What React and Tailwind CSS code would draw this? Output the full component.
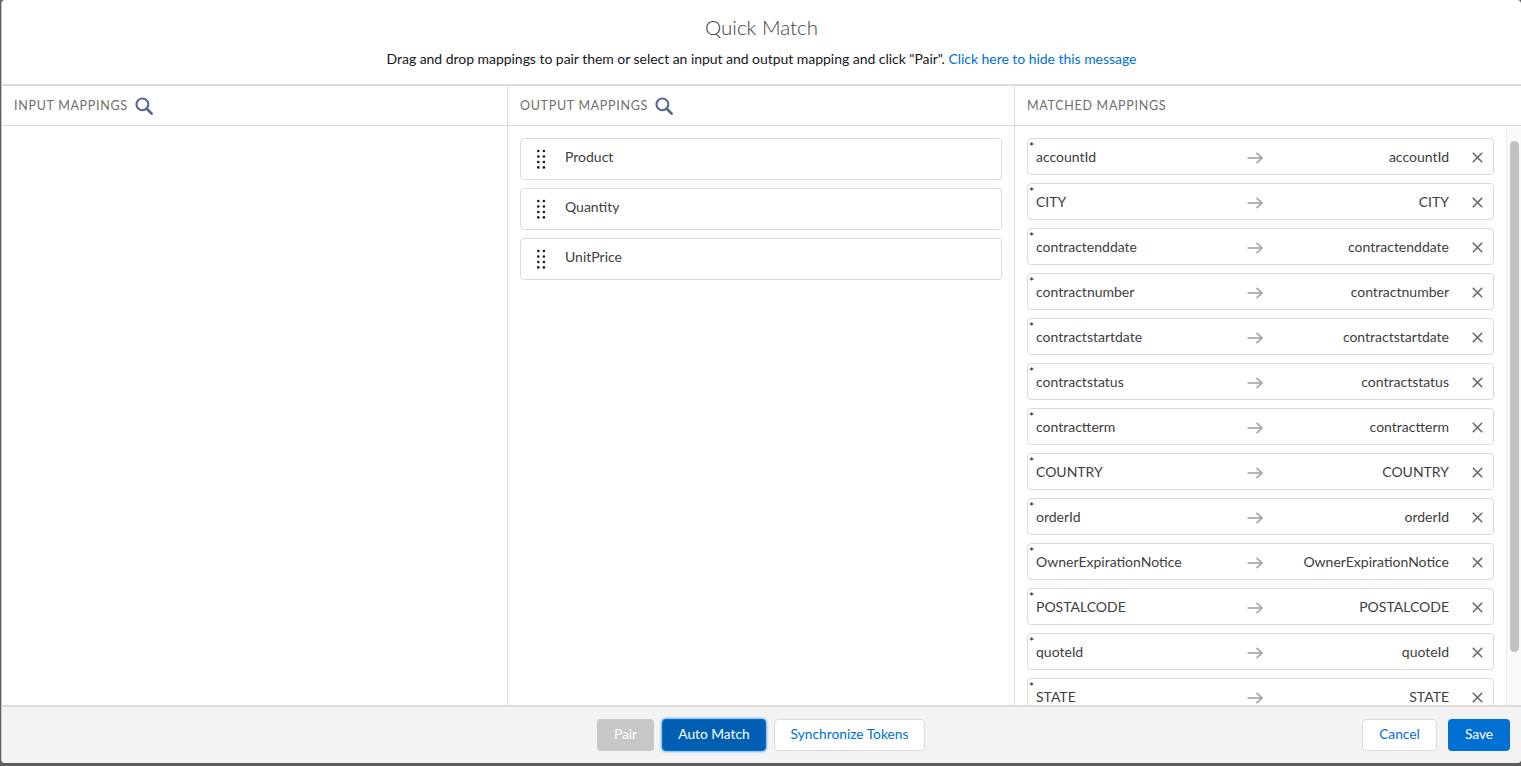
const outputs = ["Product", "Quantity", "UnitPrice"];

const matched = [
  "accountId",
  "CITY",
  "contractenddate",
  "contractnumber",
  "contractstartdate",
  "contractstatus",
  "contractterm",
  "COUNTRY",
  "orderId",
  "OwnerExpirationNotice",
  "POSTALCODE",
  "quoteId",
  "STATE",
];

function Grip() {
  return (
    <svg width="10" height="20" viewBox="0 0 10 20" fill="#1a1a1a">
      {[2, 7.5, 13, 18.4].map((y) => (
        <g key={y}>
          <rect x="1" y={y - 1.3} width="2.6" height="2.6" rx="1.3" />
          <rect x="6.6" y={y - 1.3} width="2.6" height="2.6" rx="1.3" />
        </g>
      ))}
    </svg>
  );
}

function SearchIcon() {
  return (
    <svg width="18" height="18" viewBox="0 0 18 18" fill="none" stroke="#54698d">
      <circle cx="7.4" cy="7.4" r="5.9" strokeWidth="2.1" />
      <path d="M11.8 11.8L16.6 16.6" strokeWidth="2.7" strokeLinecap="round" />
    </svg>
  );
}

function Arrow() {
  return (
    <svg width="16" height="12" viewBox="0 0 16 12" fill="none" stroke="#a8a7a5" strokeWidth="1.7">
      <path d="M0.5 6H15" />
      <path d="M9.5 0.8L15 6L9.5 11.2" />
    </svg>
  );
}

function Cross() {
  return (
    <svg width="11" height="11" viewBox="0 0 11 11" fill="none" stroke="#6b6967" strokeWidth="1.6">
      <path d="M0.8 0.8L10.2 10.2M10.2 0.8L0.8 10.2" />
    </svg>
  );
}

function ColumnHeader({ title, search }) {
  return (
    <div className="flex h-10 shrink-0 items-center gap-[7px] border-b border-[#dddbda] px-3">
      <span className="pt-[2px] text-[12.5px] tracking-[0.7px] text-[#706e6b]">{title}</span>
      {search && <SearchIcon />}
    </div>
  );
}

function OutputRow({ name }) {
  return (
    <div className="flex h-[42px] items-start rounded border border-[#dddbda] bg-white pl-[15px]">
      <div className="mt-[10px]">
        <Grip />
      </div>
      <span className="ml-[19px] mt-[8px] text-sm leading-5 text-[#3e3e3c]">{name}</span>
    </div>
  );
}

function MatchedRow({ name }) {
  return (
    <div className="relative flex h-[37px] shrink-0 items-start rounded border border-[#dddbda] bg-white pl-2 pr-[10px]">
      <span className="absolute left-[1px] top-[2px] text-xs leading-3 text-[#080707]">*</span>
      <span className="mt-[8px] w-[211px] text-sm leading-5 text-[#3e3e3c]">{name}</span>
      <div className="mt-[13px]">
        <Arrow />
      </div>
      <span className="mt-[8px] flex-1 text-right text-sm leading-5 text-[#3e3e3c]">{name}</span>
      <div className="ml-[23px] mt-[13px]">
        <Cross />
      </div>
    </div>
  );
}

export default function App() {
  return (
    <div className="h-[766px] overflow-hidden bg-[#5c5c5c] font-['Lato',sans-serif]">
      <div className="ml-[1px] flex h-[763px] flex-col overflow-hidden rounded-sm border-l border-[#c8c8c8] bg-white">
        <div className="flex h-[86px] shrink-0 flex-col items-center border-b-2 border-[#dddbda]">
          <h2 className="mt-[13px] text-[20.5px] font-light leading-[28px] text-[#3e3e3c]">Quick Match</h2>
          <p className="mt-[8px] text-sm leading-5 tracking-[-0.04px] text-[#16161a]">
            Drag and drop mappings to pair them or select an input and output mapping and click "Pair".{" "}
            <a className="text-[#0070d2]">Click here to hide this message</a>
          </p>
        </div>

        <div className="flex min-h-0 flex-1">
          <div className="w-[506px] shrink-0 border-r border-[#dddbda]">
            <ColumnHeader title="INPUT MAPPINGS" search />
          </div>
          <div className="w-[507px] shrink-0 border-r border-[#dddbda]">
            <ColumnHeader title="OUTPUT MAPPINGS" search />
            <div className="flex flex-col gap-2 px-3 pt-3">
              {outputs.map((name) => (
                <OutputRow key={name} name={name} />
              ))}
            </div>
          </div>
          <div className="flex min-w-0 flex-1 flex-col">
            <ColumnHeader title="MATCHED MAPPINGS" />
            <div className="flex min-h-0 flex-1">
              <div className="flex w-[491px] shrink-0 flex-col gap-2 overflow-hidden px-3 pt-3">
                {matched.map((name) => (
                  <MatchedRow key={name} name={name} />
                ))}
              </div>
              <div className="flex-1 border-l border-[#eeeeee] bg-[#fafafa] pl-[3px] pr-[2px] pt-[15px]">
                <div className="h-[511px] rounded-full bg-[#c1c1c1]" />
              </div>
            </div>
          </div>
        </div>

        <div className="flex h-[58px] shrink-0 items-center border-t-2 border-[#dddbda] bg-[#f3f3f3] pl-[595px] pr-[11px]">
          <button className="h-8 w-[57px] rounded bg-[#c9c7c5] pb-[2px] text-[13.75px] text-white">Pair</button>
          <button className="ml-2 h-8 w-[104px] rounded border border-[#0070d2] bg-[#005fb2] pb-[2px] text-[13.75px] text-white shadow-[0_0_3px_#0070d2]">
            Auto Match
          </button>
          <button className="ml-2 h-8 w-[151px] rounded border border-[#dddbda] bg-white pb-[2px] text-[13.75px] text-[#0070d2]">
            Synchronize Tokens
          </button>
          <button className="ml-auto h-8 w-[75px] rounded border border-[#dddbda] bg-white pb-[2px] text-[13.75px] text-[#0070d2]">
            Cancel
          </button>
          <button className="ml-[11px] h-8 w-[62px] rounded bg-[#0070d2] pb-[2px] text-[13.75px] text-white">Save</button>
        </div>
      </div>
    </div>
  );
}
